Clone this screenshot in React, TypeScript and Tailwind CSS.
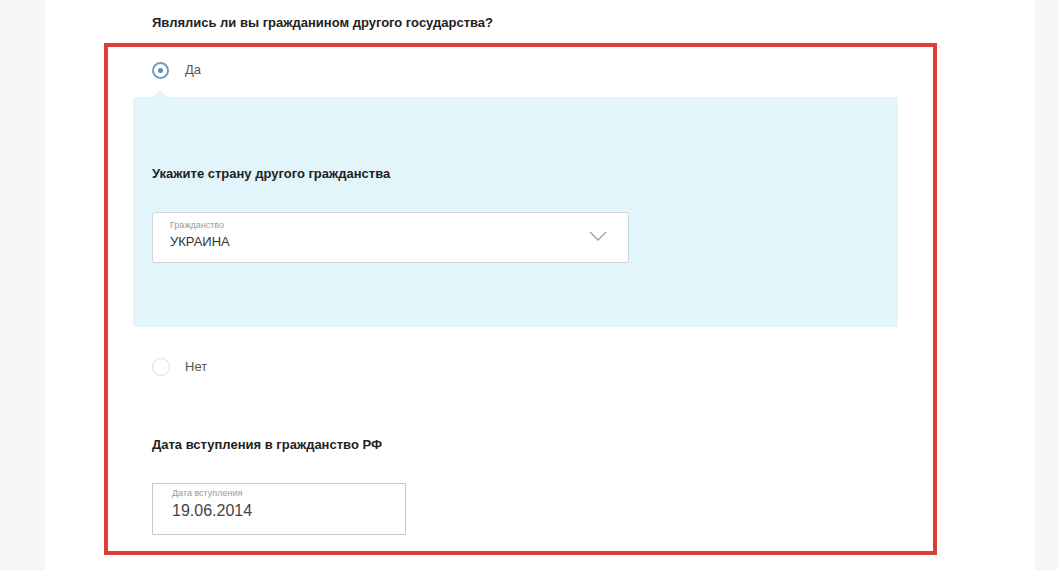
import React from 'react';

const font = { fontFamily: '"Liberation Sans", Arial, sans-serif' };

const App = () => {
  return (
    <div className="flex h-[570px] w-[1058px] bg-white" style={font}>
      {/* left gutter */}
      <div className="w-[45px] shrink-0 bg-[#f6f6f6]" />

      {/* page */}
      <div className="flex-1 pt-[15px] pl-[59px]">
        <h2 className="ml-[48px] text-[13px] font-bold leading-4 text-[#222]">
          Являлись ли вы гражданином другого государства?
        </h2>

        {/* red highlight frame */}
        <div className="mt-[12px] box-border h-[512px] w-[833px] border-4 border-[#dc3f37] pl-[25px] pt-[13px]">
          {/* Да */}
          <div className="ml-[19px] flex h-5 items-center">
            <span className="flex h-[17px] w-[17px] items-center justify-center rounded-full border-2 border-[#6d9cc4]">
              <span className="h-[5px] w-[5px] rounded-full bg-[#5a8ab5]" />
            </span>
            <span className="ml-[16px] text-[13px] text-[#555]">Да</span>
          </div>

          {/* nested panel */}
          <div className="relative mt-[17px] h-[230px] w-[765px] bg-[#e1f5fa] pt-[69px]">
            <span className="absolute -top-[7px] left-[20px] h-0 w-0 border-x-[7px] border-b-[7px] border-x-transparent border-b-[#e1f5fa]" />
            <div className="ml-[19px] text-[13px] font-bold leading-4 text-[#222]">
              Укажите страну другого гражданства
            </div>
            <div className="ml-[19px] mt-[30px] flex h-[51px] w-[477px] items-center rounded-[3px] border border-[#cfd6da] bg-white pl-[17px] pr-[21px]">
              <div className="-mt-[6px] flex flex-1 flex-col">
                <span className="text-[9px] leading-[11px] text-[#9a9a9a]">Гражданство</span>
                <span className="mt-[3px] text-[13px] leading-4 text-[#333]">УКРАИНА</span>
              </div>
              <svg width="18" height="11" viewBox="0 0 18 11" className="-mt-[2px]">
                <polyline points="1,1 9,9 17,1" fill="none" stroke="#9aa3a8" strokeWidth="1.4" />
              </svg>
            </div>
          </div>

          {/* Нет */}
          <div className="ml-[19px] mt-[30px] flex h-5 items-center">
            <span className="h-[18px] w-[18px] rounded-full border border-[#dcdcdc]" />
            <span className="ml-[15px] text-[13px] text-[#555]">Нет</span>
          </div>

          <div className="ml-[19px] mt-[60px] text-[13px] font-bold leading-4 text-[#222]">
            Дата вступления в гражданство РФ
          </div>

          <div className="ml-[19px] mt-[30px] flex h-[52px] w-[254px] flex-col border border-[#c8c8c8] pl-[19px] pt-[4px]">
            <span className="text-[9px] leading-[11px] text-[#9a9a9a]">Дата вступления</span>
            <span className="mt-[2px] text-[16px] leading-5 text-[#444]">19.06.2014</span>
          </div>
        </div>
      </div>

      {/* right gutter */}
      <div className="w-[23px] shrink-0 bg-[#f6f6f6]" />
    </div>
  );
};

export default App;
